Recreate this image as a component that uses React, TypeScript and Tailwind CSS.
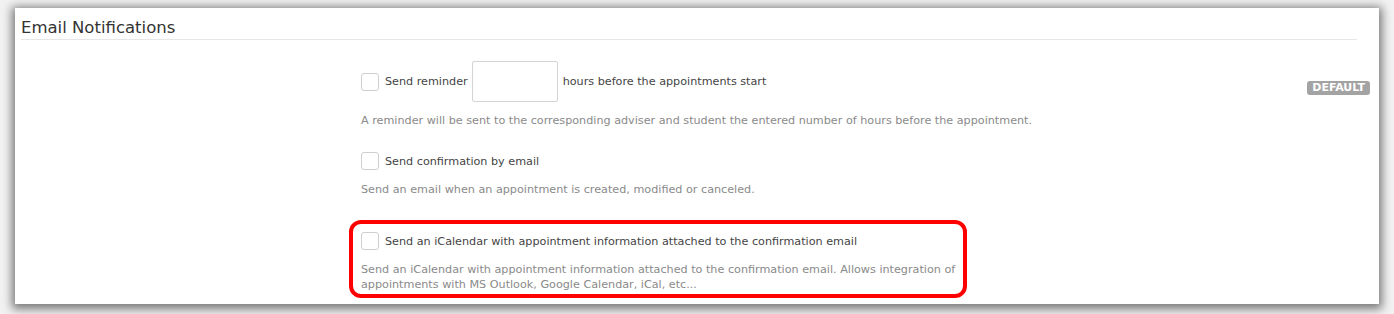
import * as React from "react";

const font = { fontFamily: '"DejaVu Sans", Verdana, sans-serif' };

function Box() {
  return <span className="w-[18px] h-[18px] shrink-0 rounded-[3px] border border-[#cfcfcf] bg-white" />;
}

export default function App() {
  return (
    <div className="w-[1394px] h-[314px] bg-[#f2f2f2] pt-2 pl-[15px] overflow-hidden" style={font}>
      <div className="w-[1364px] h-[296px] bg-white shadow-[0_2px_9px_3px_rgba(0,0,0,0.5)] pl-[6px] pr-[9px] pt-[9px]">
        {/* header */}
        <div className="mr-[13px] border-b border-[#e6e6e6]">
          <h2 className="text-[16.5px] leading-[22px] text-[#333]">Email Notifications</h2>
        </div>

        <div className="flex">
          <div className="pl-[340px] pt-[21px] flex-1">
            {/* reminder */}
            <div className="flex items-center h-[41px]">
              <Box />
              <span className="ml-[6px] pt-[2px] text-[11.2px] text-[#444]">Send reminder</span>
              <input className="ml-[4px] w-[86px] h-[41px] rounded-[2px] border border-[#d4d4d4]" />
              <span className="ml-[5px] pt-[2px] text-[11.2px] text-[#444]">hours before the appointments start</span>
            </div>
            <p className="mt-[12px] text-[11.2px] leading-[14px] text-[#8a8a8a]">
              A reminder will be sent to the corresponding adviser and student the entered number of hours before the appointment.
            </p>

            {/* confirmation */}
            <div className="flex items-center mt-[24px] h-[18px]">
              <Box />
              <span className="ml-[6px] pt-[2px] text-[11.2px] text-[#444]">Send confirmation by email</span>
            </div>
            <p className="mt-[13px] text-[11.2px] leading-[14px] text-[#8a8a8a]">
              Send an email when an appointment is created, modified or canceled.
            </p>

            {/* iCalendar, highlighted */}
            <div className="-ml-3 mt-[23px] w-[618px] rounded-[12px] border-4 border-[#ff0000] pl-2 pr-0 pt-[8px] pb-[2px]">
              <div className="flex items-center h-[18px]">
                <Box />
                <span className="ml-[6px] pt-[2px] text-[11.2px] text-[#444]">
                  Send an iCalendar with appointment information attached to the confirmation email
                </span>
              </div>
              <p className="mt-[12px] text-[11.2px] leading-[15px] text-[#8a8a8a]">
                Send an iCalendar with appointment information attached to the confirmation email. Allows integration of appointments with MS Outlook, Google Calendar, iCal, etc...
              </p>
            </div>
          </div>

          <div className="pt-[34px]">
            <span className="inline-block rounded-[3px] bg-[#a3a3a3] px-[5px] text-[11px] leading-[14px] font-bold text-white">
              DEFAULT
            </span>
          </div>
        </div>
      </div>
    </div>
  );
}
